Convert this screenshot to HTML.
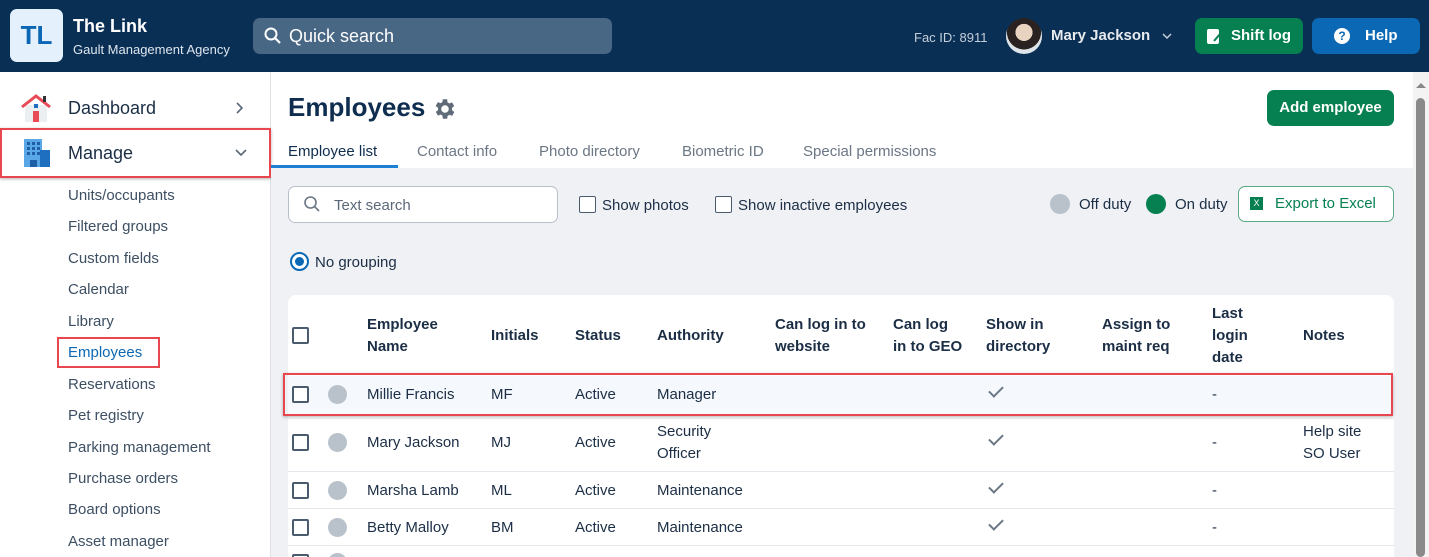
<!DOCTYPE html>
<html><head><meta charset="utf-8"><style>
*{box-sizing:border-box;margin:0;padding:0}
html,body{width:1429px;height:557px;overflow:hidden}
body{font-family:"Liberation Sans",sans-serif;color:#1b2e45;background:#fff;position:relative}
.abs{position:absolute}
.hdr{left:0;top:0;width:1429px;height:72px;background:#0a2f55}
.side{left:0;top:72px;width:271px;height:485px;border-right:1px solid #dde1e6;background:#fff}
.sub{position:absolute;left:68px;font-size:15px;color:#3d4f63}
.gray{left:271px;top:168px;width:1142px;height:389px;background:#f0f1f5}
.card{left:288px;top:295px;width:1106px;height:262px;background:#fff;border-radius:8px 8px 0 0}
.th{position:absolute;font-size:15px;font-weight:bold;line-height:22px;color:#1b2e45}
.td{position:absolute;font-size:15px;line-height:22px;color:#1b2e45}
.cb{position:absolute;width:17px;height:17px;border:2px solid #4a5b6e;border-radius:2px;background:#fff}
.dot{position:absolute;width:19px;height:19px;border-radius:50%;background:#b9c1ca}
.line{position:absolute;left:288px;width:1106px;height:1px;background:#e3e6ea}
.ck{position:absolute;left:989px;width:14px;height:8px;border-left:2px solid #6b7785;border-bottom:2px solid #6b7785;transform:rotate(-45deg)}
</style></head><body>
<div class="abs hdr"></div>
<div class="abs" style="left:10px;top:9px;width:53px;height:53px;background:#e4f0fb;border-radius:7px;color:#0b66b5;font-size:26px;font-weight:bold;text-align:center;line-height:53px">TL</div>
<div class="abs" style="left:73px;top:16px;color:#fff;font-size:18px;font-weight:bold">The Link</div>
<div class="abs" style="left:73px;top:42px;color:#dde6ef;font-size:13px">Gault Management Agency</div>
<div class="abs" style="left:253px;top:18px;width:359px;height:36px;background:#486784;border-radius:7px"></div>
<svg class="abs" style="left:263px;top:26px" width="20" height="20" viewBox="0 0 20 20"><circle cx="8" cy="8" r="5.5" fill="none" stroke="#fff" stroke-width="2"/><line x1="12" y1="12" x2="17" y2="17" stroke="#fff" stroke-width="2.2"/></svg>
<div class="abs" style="left:289px;top:26px;color:#fff;font-size:18px">Quick search</div>
<div class="abs" style="left:914px;top:30px;color:#c5cfd9;font-size:13px">Fac ID: 8911</div>
<div class="abs" style="left:1006px;top:18px;width:36px;height:36px;border-radius:50%;background:radial-gradient(circle at 50% 40%,#e8d2c0 0 30%,#2a2220 31% 60%,#dfe4ea 61%)"></div>
<div class="abs" style="left:1051px;top:27px;color:#fff;font-size:15px;font-weight:bold;opacity:.9">Mary Jackson</div>
<svg class="abs" style="left:1161px;top:31px" width="12" height="10"><path d="M2 3l4 4 4-4" fill="none" stroke="#c5cfd9" stroke-width="1.5"/></svg>
<div class="abs" style="left:1195px;top:18px;width:108px;height:36px;background:#068050;border-radius:7px;color:#fff;font-size:15px;font-weight:bold;line-height:36px;padding-left:36px">Shift log</div>
<svg class="abs" style="left:1205px;top:27px" width="18" height="18"><rect x="2" y="2" width="12" height="15" rx="2" fill="#fff"/><path d="M9 14l6-7" stroke="#068050" stroke-width="2"/></svg>
<div class="abs" style="left:1312px;top:18px;width:108px;height:36px;background:#0a68b5;border-radius:7px;color:#fff;font-size:15px;font-weight:bold;line-height:36px;padding-left:53px">Help</div>
<div class="abs" style="left:1334px;top:28px;width:16px;height:16px;border-radius:50%;background:#fff;color:#0a68b5;font-size:12px;font-weight:bold;text-align:center;line-height:16px">?</div>

<div class="abs side"></div>
<svg class="abs" style="left:20px;top:93px" width="32" height="30" viewBox="0 0 32 30"><rect x="5" y="12" width="22" height="17" fill="#eceff2"/><path d="M2 14L16 3l14 11" fill="none" stroke="#e84b55" stroke-width="3"/><rect x="23" y="3" width="3" height="6" fill="#333"/><rect x="13" y="18" width="6" height="11" fill="#e84b55"/><rect x="14" y="11" width="4" height="4" fill="#1e6fc0"/></svg>
<div class="abs" style="left:68px;top:98px;font-size:18px">Dashboard</div>
<svg class="abs" style="left:234px;top:101px" width="12" height="14"><path d="M3 2l5 5-5 5" fill="none" stroke="#5a6878" stroke-width="1.6"/></svg>
<div class="abs" style="left:0;top:128px;width:271px;height:50px;border:2px solid #e8474f;box-shadow:0 1px 3px rgba(0,0,0,.3)"></div>
<svg class="abs" style="left:22px;top:138px" width="30" height="30" viewBox="0 0 30 30"><rect x="2" y="1" width="18" height="28" fill="#5aa7e8"/><rect x="18" y="12" width="10" height="17" fill="#1e6fc0"/><g fill="#1e5fa8"><rect x="5" y="4" width="3" height="3"/><rect x="10" y="4" width="3" height="3"/><rect x="15" y="4" width="3" height="3"/><rect x="5" y="9" width="3" height="3"/><rect x="10" y="9" width="3" height="3"/><rect x="15" y="9" width="3" height="3"/><rect x="5" y="14" width="3" height="3"/><rect x="10" y="14" width="3" height="3"/><rect x="15" y="14" width="3" height="3"/><rect x="8" y="22" width="7" height="7"/></g></svg>
<div class="abs" style="left:68px;top:143px;font-size:18px">Manage</div>
<svg class="abs" style="left:234px;top:148px" width="14" height="10"><path d="M2 2l5 5 5-5" fill="none" stroke="#5a6878" stroke-width="1.6"/></svg>
<div class="sub" style="top:187px">Units/occupants</div>
<div class="sub" style="top:218px">Filtered groups</div>
<div class="sub" style="top:250px">Custom fields</div>
<div class="sub" style="top:281px">Calendar</div>
<div class="sub" style="top:313px">Library</div>
<div class="abs" style="left:57px;top:337px;width:103px;height:31px;border:2px solid #e8474f"></div>
<div class="sub" style="top:344px;color:#0a68b5">Employees</div>
<div class="sub" style="top:376px">Reservations</div>
<div class="sub" style="top:407px">Pet registry</div>
<div class="sub" style="top:439px">Parking management</div>
<div class="sub" style="top:470px">Purchase orders</div>
<div class="sub" style="top:501px">Board options</div>
<div class="sub" style="top:533px">Asset manager</div>

<div class="abs" style="left:288px;top:92px;font-size:26px;font-weight:bold;color:#0f2d4f">Employees</div>
<svg class="abs" style="left:432px;top:96px" width="26" height="26" viewBox="0 0 24 24"><path fill="#5f6b78" d="M19.4 13a7.5 7.5 0 000-2l2.1-1.6-2-3.5-2.5 1a7 7 0 00-1.7-1L15 3h-4l-.4 2.7a7 7 0 00-1.7 1l-2.5-1-2 3.5L6.6 11a7.5 7.5 0 000 2l-2.1 1.6 2 3.5 2.5-1a7 7 0 001.7 1L11 21h4l.4-2.7a7 7 0 001.7-1l2.5 1 2-3.5zM13 15.5a3.5 3.5 0 110-7 3.5 3.5 0 010 7z" transform="translate(-1 0)"/></svg>
<div class="abs" style="left:1267px;top:90px;width:127px;height:36px;background:#068050;border-radius:7px;color:#fff;font-size:15px;font-weight:bold;line-height:36px;text-align:center">Add employee</div>
<div class="abs" style="left:288px;top:143px;font-size:15px;color:#0f2d4f">Employee list</div>
<div class="abs" style="left:271px;top:165px;width:127px;height:3px;background:#1d7fd3"></div>
<div class="abs" style="left:417px;top:143px;font-size:15px;color:#6b7785">Contact info</div>
<div class="abs" style="left:539px;top:143px;font-size:15px;color:#6b7785">Photo directory</div>
<div class="abs" style="left:682px;top:143px;font-size:15px;color:#6b7785">Biometric ID</div>
<div class="abs" style="left:803px;top:143px;font-size:15px;color:#6b7785">Special permissions</div>

<div class="abs gray"></div>
<div class="abs" style="left:288px;top:186px;width:270px;height:37px;background:#fff;border:1px solid #b8c0c9;border-radius:7px"></div>
<svg class="abs" style="left:303px;top:195px" width="18" height="18"><circle cx="7.5" cy="7.5" r="5.5" fill="none" stroke="#6b7785" stroke-width="1.6"/><line x1="11.5" y1="11.5" x2="16" y2="16" stroke="#6b7785" stroke-width="1.6"/></svg>
<div class="abs" style="left:334px;top:197px;font-size:15px;color:#5a6878">Text search</div>
<div class="cb" style="left:579px;top:196px;border-width:1.5px"></div>
<div class="abs" style="left:602px;top:197px;font-size:15px">Show photos</div>
<div class="cb" style="left:715px;top:196px;border-width:1.5px"></div>
<div class="abs" style="left:738px;top:197px;font-size:15px">Show inactive employees</div>
<div class="dot" style="left:1050px;top:194px;width:20px;height:20px"></div>
<div class="abs" style="left:1079px;top:196px;font-size:15px">Off duty</div>
<div class="dot" style="left:1146px;top:194px;width:20px;height:20px;background:#068050"></div>
<div class="abs" style="left:1175px;top:196px;font-size:15px">On duty</div>
<div class="abs" style="left:1238px;top:186px;width:156px;height:36px;background:#fff;border:1px solid #5aa883;border-radius:7px;color:#068050;font-size:15px;line-height:34px;padding-left:36px">Export to Excel</div>
<div class="abs" style="left:1250px;top:197px;width:13px;height:13px;background:#068050;color:#fff;font-size:9px;text-align:center;line-height:13px">X</div>
<div class="abs" style="left:290px;top:252px;width:19px;height:19px;border:2px solid #0a68b5;border-radius:50%;background:#fff"></div>
<div class="abs" style="left:295px;top:257px;width:9px;height:9px;border-radius:50%;background:#0a68b5"></div>
<div class="abs" style="left:315px;top:254px;font-size:15px">No grouping</div>

<div class="abs card"></div>
<div class="cb" style="left:292px;top:327px"></div>
<div class="th" style="left:367px;top:314px">Employee<br>Name</div>
<div class="th" style="left:491px;top:325px">Initials</div>
<div class="th" style="left:575px;top:325px">Status</div>
<div class="th" style="left:657px;top:325px">Authority</div>
<div class="th" style="left:775px;top:314px">Can log in to<br>website</div>
<div class="th" style="left:893px;top:314px">Can log<br>in to GEO</div>
<div class="th" style="left:986px;top:314px">Show in<br>directory</div>
<div class="th" style="left:1102px;top:314px">Assign to<br>maint req</div>
<div class="th" style="left:1212px;top:303px">Last<br>login<br>date</div>
<div class="th" style="left:1303px;top:325px">Notes</div>

<div class="abs" style="left:288px;top:376px;width:1106px;height:38px;background:#f5f8fc"></div>
<div class="abs" style="left:283px;top:373px;width:1110px;height:43px;border:2px solid #e8474f;box-shadow:0 1px 3px rgba(0,0,0,.3)"></div>
<div class="cb" style="left:292px;top:386px"></div><div class="dot" style="left:328px;top:385px"></div>
<div class="td" style="left:367px;top:384px">Millie Francis</div><div class="td" style="left:491px;top:384px">MF</div><div class="td" style="left:575px;top:384px">Active</div><div class="td" style="left:657px;top:384px">Manager</div><div class="ck" style="top:386px"></div><div class="td" style="left:1212px;top:384px">-</div>
<div class="line" style="top:418px"></div>
<div class="cb" style="left:292px;top:434px"></div><div class="dot" style="left:328px;top:433px"></div>
<div class="td" style="left:367px;top:432px">Mary Jackson</div><div class="td" style="left:491px;top:432px">MJ</div><div class="td" style="left:575px;top:432px">Active</div><div class="td" style="left:657px;top:421px">Security<br>Officer</div><div class="ck" style="top:434px"></div><div class="td" style="left:1212px;top:432px">-</div><div class="td" style="left:1303px;top:421px">Help site<br>SO User</div>
<div class="line" style="top:471px"></div>
<div class="cb" style="left:292px;top:482px"></div><div class="dot" style="left:328px;top:481px"></div>
<div class="td" style="left:367px;top:480px">Marsha Lamb</div><div class="td" style="left:491px;top:480px">ML</div><div class="td" style="left:575px;top:480px">Active</div><div class="td" style="left:657px;top:480px">Maintenance</div><div class="ck" style="top:482px"></div><div class="td" style="left:1212px;top:480px">-</div>
<div class="line" style="top:508px"></div>
<div class="cb" style="left:292px;top:519px"></div><div class="dot" style="left:328px;top:518px"></div>
<div class="td" style="left:367px;top:517px">Betty Malloy</div><div class="td" style="left:491px;top:517px">BM</div><div class="td" style="left:575px;top:517px">Active</div><div class="td" style="left:657px;top:517px">Maintenance</div><div class="ck" style="top:519px"></div><div class="td" style="left:1212px;top:517px">-</div>
<div class="line" style="top:545px"></div>
<div class="cb" style="left:292px;top:554px"></div><div class="dot" style="left:328px;top:553px"></div>

<div class="abs" style="left:1413px;top:72px;width:16px;height:485px;background:#f3f3f3"></div>
<svg class="abs" style="left:1414px;top:80px" width="14" height="10"><path d="M2 8l5-5 5 5z" fill="#888"/></svg>
<div class="abs" style="left:1416px;top:98px;width:9px;height:459px;background:#8a8a8a;border-radius:5px"></div>
</body></html>
